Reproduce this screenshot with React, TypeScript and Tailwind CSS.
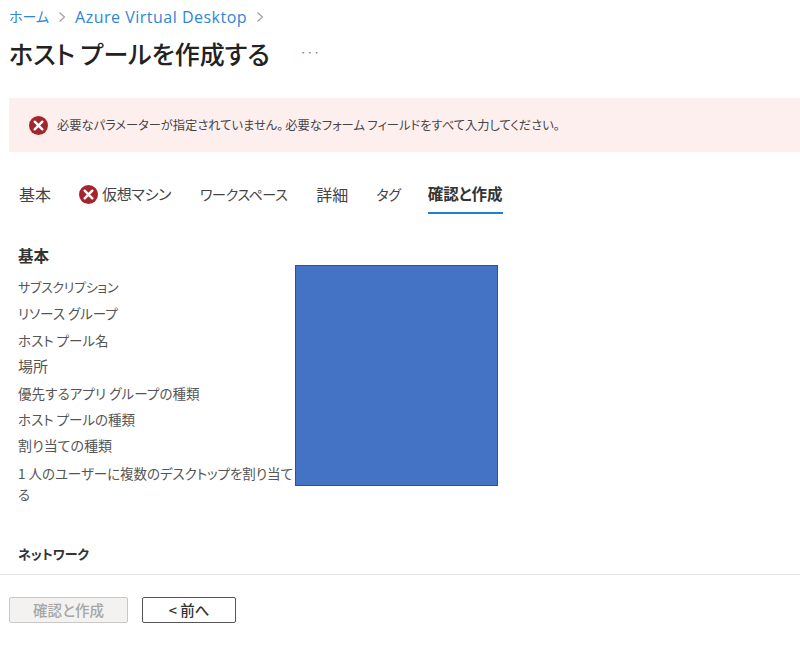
import React from 'react';

const font = '[font-family:"Noto_Sans_CJK_JP","Liberation_Sans",sans-serif]';

const ErrorIcon = ({ size }: { size: number }) => (
  <svg width={size} height={size} viewBox="0 0 20 20" className="shrink-0">
    <circle cx="10" cy="10" r="10" fill="#a4262c" />
    <path d="M6 6l8 8M14 6l-8 8" stroke="#fff" strokeWidth="2.6" strokeLinecap="round" />
  </svg>
);

const Chevron = () => (
  <svg width="8" height="12" viewBox="0 0 8 12" className="shrink-0">
    <path d="M1.5 1.5L6.5 6l-5 4.5" fill="none" stroke="#9a9a9a" strokeWidth="1.1" />
  </svg>
);

const rows = [
  { text: 'サブスクリプション', cls: 'text-[13px] tracking-[-0.3px]' },
  { text: 'リソース グループ', cls: 'text-[13.5px]' },
  { text: 'ホスト プール名', cls: 'text-[13.5px]' },
  { text: '場所', cls: 'text-[15px]' },
  { text: '優先するアプリ グループの種類', cls: 'text-[13.5px] tracking-[0.1px]' },
  { text: 'ホスト プールの種類', cls: 'text-[13.5px]' },
  { text: '割り当ての種類', cls: 'text-[14px]' },
];

export default function App() {
  return (
    <div className={`relative h-[648px] w-[800px] overflow-hidden bg-white ${font} [font-feature-settings:"palt"]`}>
      {/* breadcrumb */}
      <div className="flex h-[33px] items-center pl-[9px] text-[14px] text-[#2f86d6]">
        <span>ホーム</span>
        <span className="mx-[9px] flex"><Chevron /></span>
        <span className="text-[16px] tracking-[0.5px] [font-family:'Open_Sans',sans-serif]">Azure Virtual Desktop</span>
        <span className="ml-[9px] flex"><Chevron /></span>
      </div>

      {/* title */}
      <div className="flex h-[42px] items-center pl-[9px]">
        <h1 className="-mt-[3px] text-[25px] leading-[42px] font-medium text-[#222]">ホスト プールを作成する</h1>
        <span className="-mt-[4px] ml-[30px] text-[12px] text-[#777]">···</span>
      </div>

      {/* error banner */}
      <div className="mt-[23px] ml-[9px] flex h-[54px] items-center bg-[#feefef] pl-[20px] text-[12.25px] text-[#444]">
        <ErrorIcon size={19} />
        <span className="ml-[9px]">
          <span className="mr-[2px]">必要なパラメーターが指定されていません。</span>
          必要なフォーム フィールドをすべて入力してください。
        </span>
      </div>

      {/* tabs */}
      <div className="mt-[25px] flex h-[37px] pl-[19px] text-[#444]">
        <div className="pt-[5px] text-[16px]">基本</div>
        <div className="ml-[28px] flex items-start pt-[6px] text-[15px] tracking-[-0.3px]">
          <span className="mt-[2px] mr-[4px]"><ErrorIcon size={19} /></span>
          仮想マシン
        </div>
        <div className="ml-[29px] pt-[7px] text-[14px] tracking-[-0.4px]">ワークスペース</div>
        <div className="ml-[29px] pt-[5px] text-[16px]">詳細</div>
        <div className="ml-[28px] pt-[7px] text-[14px] tracking-[-0.3px]">タグ</div>
        <div className="ml-[27px] border-b-2 border-[#1a7fd6] pt-[5px] text-[15.5px] font-bold text-[#333]">確認と作成</div>
      </div>

      {/* summary */}
      <div className="mt-[30px] pl-[18px] text-[13.5px] text-[#555]">
        <div className="h-[30px] text-[15.5px] font-bold text-[#333]">基本</div>
        <div className="w-[277px]">
          {rows.map((r) => (
            <div key={r.text} className={`flex h-[26.4px] items-center ${r.cls}`}>{r.text}</div>
          ))}
          <div className="pt-[4px] leading-[21px] tracking-[-0.05px]">1 人のユーザーに複数のデスクトップを割り当てる</div>
        </div>
        <div className="mt-[39px] text-[13px] font-bold text-[#333]">ネットワーク</div>
      </div>

      {/* redaction over the values */}
      <div className="absolute top-[265px] left-[295px] h-[221px] w-[203px] border border-[#2f528f] bg-[#4472c4]" />

      {/* footer */}
      <div className="absolute top-[574px] right-0 left-0 flex h-[74px] gap-[14px] border-t border-[#e5e5e5] bg-white pt-[22px] pl-[9px] text-[14.5px]">
        <button className="h-[26px] w-[119px] rounded-[2px] border border-[#c8c8c8] bg-[#f3f2f1] font-medium text-[#a6a6a6]">確認と作成</button>
        <button className="h-[26px] w-[94px] rounded-[2px] border border-[#555] bg-white font-medium text-[#333]">&lt; 前へ</button>
      </div>
    </div>
  );
}
